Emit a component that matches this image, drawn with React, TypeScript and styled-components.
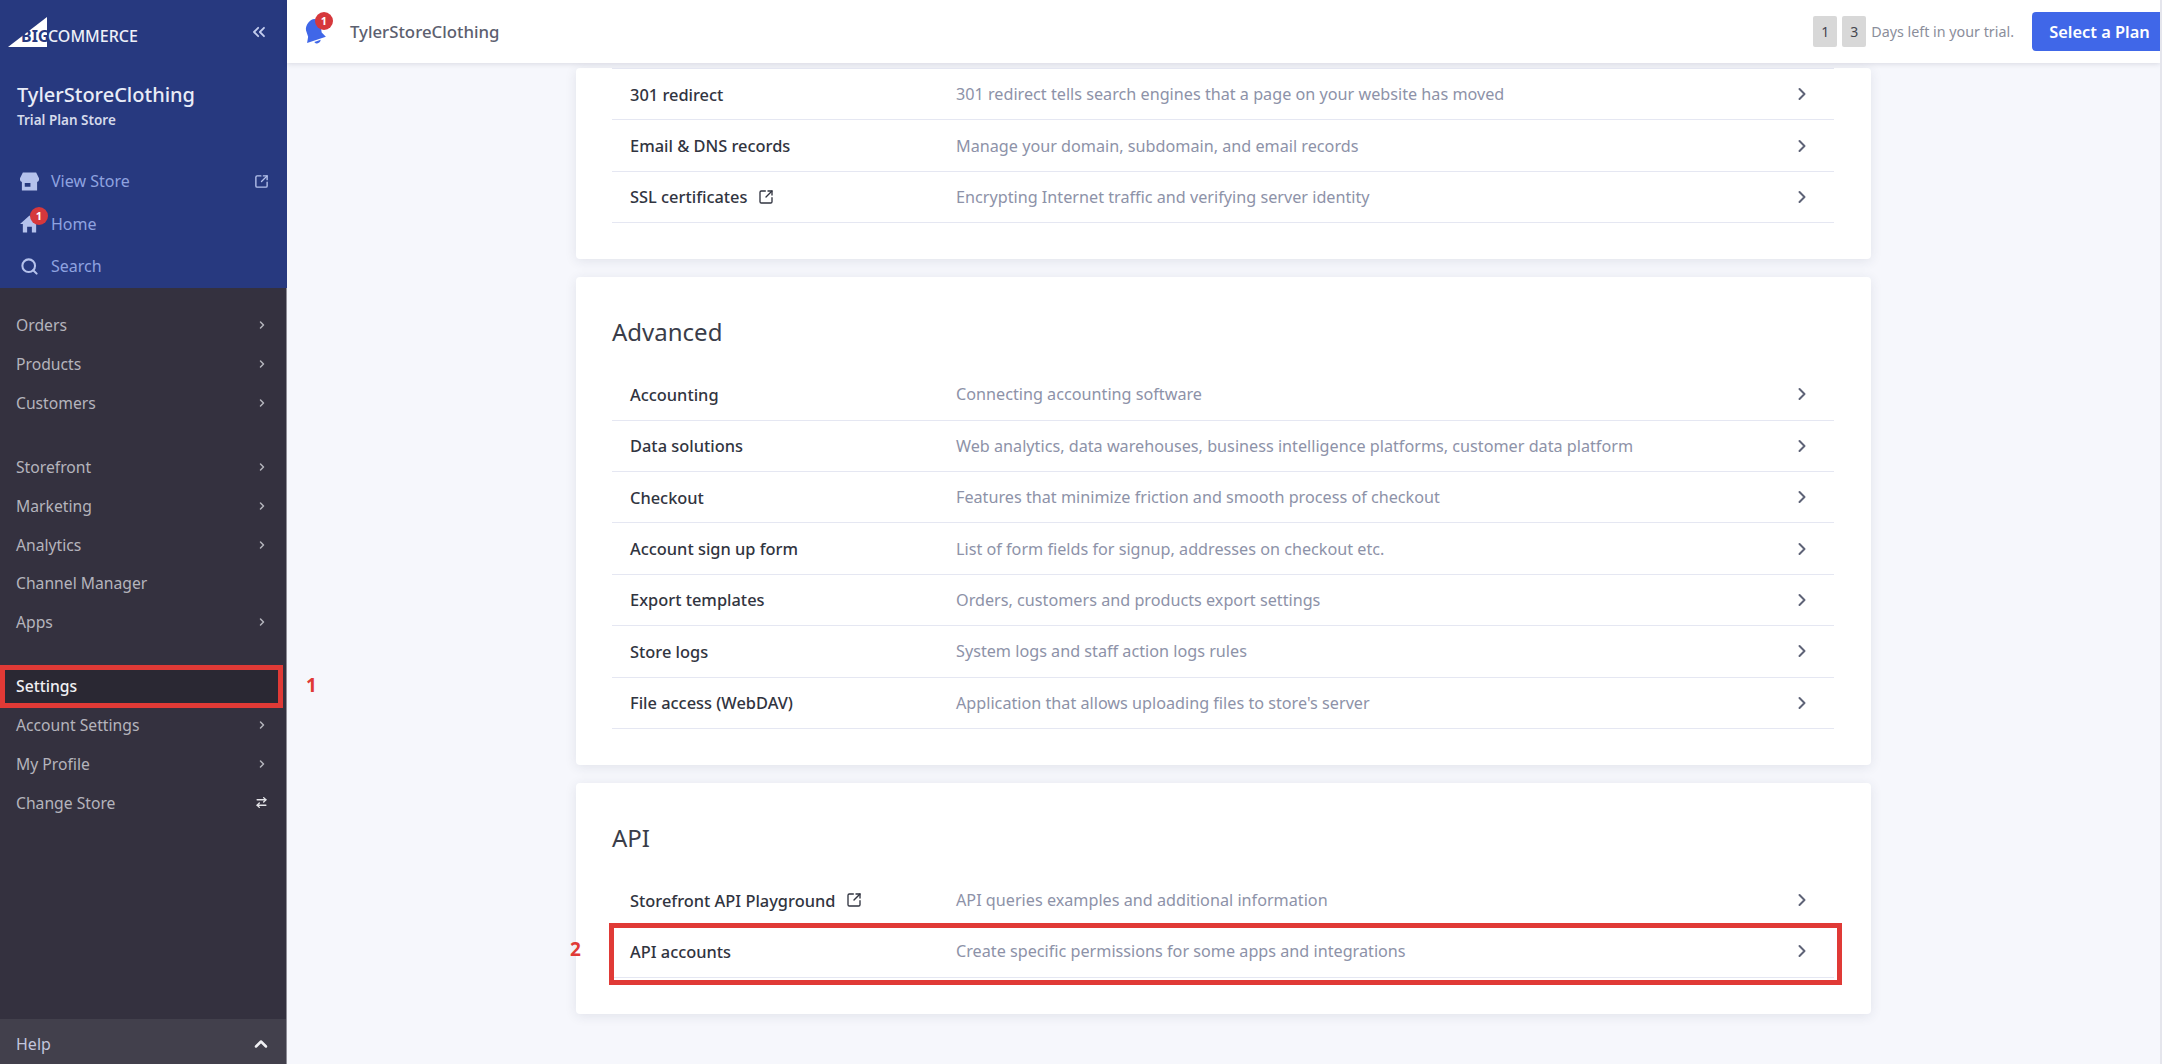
import React from "react";
import styled, { createGlobalStyle } from "styled-components";
import { ChevronRight, ChevronUp, ChevronsLeft, SquareArrowOutUpRight, Search, ArrowRightLeft } from "lucide-react";

const Global = createGlobalStyle`
  html, body {
    margin: 0;
    height: 100%;
    overflow: hidden;
    background: #f6f7fc;
    font-family: "Noto Sans", "Open Sans", sans-serif;
  }
  *, *::before, *::after { box-sizing: border-box; }
`;

const Page = styled.div`
  display: flex;
  width: 2162px;
  height: 1064px;
  overflow: hidden;
  border-right: 2px solid #e4e5ec;
`;

const Sidebar = styled.aside`
  width: 287px;
  flex: none;
  display: flex;
  flex-direction: column;
  background: #34313f;
  border-right: 1px solid #8e8d97;
`;

const BlueSection = styled.div`
  height: 288px;
  background: #27397f;
  padding: 17px 18px 0 8px;
  margin-right: -1px;
`;

const LogoRow = styled.div`
  height: 30px;
  display: flex;
  align-items: center;
  justify-content: space-between;
`;

const Logo = styled.div`
  position: relative;
  width: 132px;
  height: 30px;
`;

const LogoBig = styled.span`
  position: absolute;
  left: 13px;
  top: 9px;
  font-size: 16px;
  line-height: 20px;
  font-weight: 700;
  color: #27397f;
`;

const LogoCommerce = styled.span`
  position: absolute;
  left: 40px;
  top: 9px;
  font-size: 16px;
  line-height: 20px;
  font-weight: 500;
  color: #eef0f8;
`;

const StoreName = styled.div`
  margin: 34px 0 0 9px;
  font-size: 20px;
  line-height: 28px;
  font-weight: 500;
  color: #e9ecf7;
`;

const StorePlan = styled.div`
  margin: 1px 0 0 9px;
  font-size: 13.5px;
  line-height: 20px;
  font-weight: 600;
  color: #d5daeb;
`;

const BlueNav = styled.div`
  margin: 30px 0 0 12px;
  display: flex;
  flex-direction: column;
`;

const BlueItem = styled.div`
  position: relative;
  height: 42.5px;
  display: flex;
  align-items: center;
  gap: 12px;
  font-size: 16px;
  color: #8fa3e0;
`;

const BlueIcon = styled.span`
  position: relative;
  width: 19px;
  height: 20px;
  flex: none;
  display: flex;
  align-items: center;
  justify-content: center;
  color: #b5c2ec;
`;

const BlueLabel = styled.span`
  flex: 1;
`;

const Badge = styled.span`
  position: absolute;
  top: -7px;
  left: 10px;
  width: 18px;
  height: 18px;
  border-radius: 50%;
  background: #d6383c;
  color: #fff;
  font-size: 11px;
  font-weight: 700;
  line-height: 18px;
  text-align: center;
`;

const DarkNav = styled.nav`
  padding-top: 18px;
  flex: 1;
  display: flex;
  flex-direction: column;
`;

const NavGroup = styled.div`
  margin-bottom: 25.5px;
`;

const NavItem = styled.div<{ $active?: boolean }>`
  height: 38.75px;
  display: flex;
  align-items: center;
  justify-content: space-between;
  padding: 0 18px 0 16px;
  font-size: 15.7px;
  font-weight: ${(p) => (p.$active ? 500 : 400)};
  color: ${(p) => (p.$active ? "#f0f0f3" : "#b4b4bc")};
`;

const Highlight = styled.div`
  position: relative;
  background: #2a2833;
  width: 283px;
  &::after {
    content: "";
    position: absolute;
    left: 0;
    top: -2px;
    width: 283px;
    height: 43px;
    border: 5px solid #e03a36;
  }
`;

const Marker = styled.span`
  position: absolute;
  font-size: 19px;
  font-weight: 700;
  line-height: 24px;
  color: #e03a36;
`;

const SidebarMarker = styled(Marker)`
  left: 306px;
  top: 6px;
`;

const HelpBar = styled.div`
  height: 45px;
  display: flex;
  align-items: center;
  justify-content: space-between;
  padding: 4px 15px 0 16px;
  background: #42404c;
  font-size: 16px;
  color: #c2c6dc;
`;

const Main = styled.main`
  flex: 1;
  min-width: 0;
  display: flex;
  flex-direction: column;
`;

const Header = styled.header`
  position: relative;
  z-index: 2;
  height: 63px;
  flex: none;
  display: flex;
  align-items: center;
  background: #fff;
  box-shadow: 0 1px 5px rgba(40, 45, 70, 0.14);
  padding: 0 0 0 18px;
`;

const Bell = styled.span`
  position: relative;
  width: 24px;
  height: 30px;
  display: flex;
  align-items: center;
  justify-content: center;
`;

const BellBadge = styled(Badge)`
  top: -5px;
  left: 10px;
`;

const HeaderStore = styled.span`
  margin-left: 21px;
  font-size: 16.8px;
  font-weight: 500;
  color: #5c606f;
`;

const HeaderRight = styled.div`
  margin-left: auto;
  display: flex;
  align-items: center;
`;

const Digit = styled.span`
  width: 24px;
  height: 31px;
  margin-right: 5px;
  border-radius: 2px;
  background: #d8d8d8;
  display: flex;
  align-items: center;
  justify-content: center;
  font-size: 14px;
  color: #44464f;
`;

const TrialText = styled.span`
  font-size: 14.3px;
  color: #8b8e9b;
  margin-right: 18px;
`;

const PlanButton = styled.button`
  width: 128px;
  height: 39px;
  border: 0;
  border-radius: 4px 0 0 4px;
  background: #4067e8;
  color: #fff;
  font-family: inherit;
  font-size: 16.4px;
  font-weight: 600;
  padding: 0 0 0 7px;
`;

const Content = styled.div`
  flex: 1;
  min-height: 0;
  overflow: hidden;
  padding: 5px 289px 0 289px;
  display: flex;
  flex-direction: column;
  gap: 18px;
`;

const Card = styled.section`
  background: #fff;
  border-radius: 4px;
  box-shadow: 0 2px 12px rgba(40, 45, 80, 0.1);
  padding: 0 37px 36px 36px;
  flex: none;
`;

const CardTitle = styled.h2`
  height: 92px;
  margin: 0;
  padding-top: 38px;
  font-size: 24px;
  line-height: 34px;
  font-weight: 400;
  color: #3a3d49;
`;

const TopRule = styled.div`
  border-top: 1px solid #e5e7f2;
`;

const Row = styled.div`
  position: relative;
  height: 51.4px;
  display: grid;
  grid-template-columns: 326px 1fr 24px;
  align-items: center;
  padding: 0 18px 0 18px;
  border-bottom: 1px solid #e5e7f2;
`;

const RowTitle = styled.span`
  display: flex;
  align-items: center;
  gap: 11px;
  font-size: 16.4px;
  font-weight: 500;
  color: #313440;
`;

const RowDesc = styled.span`
  font-size: 16.2px;
  color: #8d92a8;
`;

const Chevron = styled(ChevronRight)`
  color: #5e6377;
`;

const RowOutline = styled.div`
  position: absolute;
  left: -3px;
  right: -8px;
  top: -3px;
  height: 62px;
  border: 5px solid #e03a36;
  pointer-events: none;
`;

const RowMarker = styled(Marker)`
  left: -42px;
  top: 11px;
`;

type Item = { title: string; desc: string; link?: boolean };

const firstRows: Item[] = [
  { title: "301 redirect", desc: "301 redirect tells search engines that a page on your website has moved" },
  { title: "Email & DNS records", desc: "Manage your domain, subdomain, and email records" },
  { title: "SSL certificates", desc: "Encrypting Internet traffic and verifying server identity", link: true },
];

const advancedRows: Item[] = [
  { title: "Accounting", desc: "Connecting accounting software" },
  { title: "Data solutions", desc: "Web analytics, data warehouses, business intelligence platforms, customer data platform" },
  { title: "Checkout", desc: "Features that minimize friction and smooth process of checkout" },
  { title: "Account sign up form", desc: "List of form fields for signup, addresses on checkout etc." },
  { title: "Export templates", desc: "Orders, customers and products export settings" },
  { title: "Store logs", desc: "System logs and staff action logs rules" },
  { title: "File access (WebDAV)", desc: "Application that allows uploading files to store's server" },
];

const SettingRow = ({ item, children }: { item: Item; children?: React.ReactNode }) => (
  <Row>
    <RowTitle>
      {item.title}
      {item.link && <SquareArrowOutUpRight size={16} strokeWidth={2} />}
    </RowTitle>
    <RowDesc>{item.desc}</RowDesc>
    <Chevron size={20} strokeWidth={2.4} />
    {children}
  </Row>
);

const App = () => (
  <Page>
    <Global />
    <Sidebar>
      <BlueSection>
        <LogoRow>
          <Logo>
            <svg width="40" height="30" viewBox="0 0 40 30">
              <path d="M39 0v30H0z" fill="#fff" />
            </svg>
            <LogoBig>BIG</LogoBig>
            <LogoCommerce>COMMERCE</LogoCommerce>
          </Logo>
          <ChevronsLeft size={20} color="#c3cdee" strokeWidth={2.2} />
        </LogoRow>
        <StoreName>TylerStoreClothing</StoreName>
        <StorePlan>Trial Plan Store</StorePlan>
        <BlueNav>
          <BlueItem>
            <BlueIcon>
              <svg width="20" height="19" viewBox="0 0 20 19" fill="currentColor">
                <path d="M3 0h14l3 6v2a2.5 2.5 0 0 1-2 2v9H2v-9a2.5 2.500 0 0 1-2-2V6zM5 11v4h6v-4z" fillRule="evenodd" />
              </svg>
            </BlueIcon>
            <BlueLabel>View Store</BlueLabel>
            <SquareArrowOutUpRight size={15} color="#b5c2ec" strokeWidth={2.2} />
          </BlueItem>
          <BlueItem>
            <BlueIcon>
              <svg width="20" height="18" viewBox="0 0 20 18" fill="currentColor">
                <path d="M10 0l10 9h-3v9h-4.500v-6h-5v6H3V9H0z" />
              </svg>
              <Badge>1</Badge>
            </BlueIcon>
            <BlueLabel>Home</BlueLabel>
          </BlueItem>
          <BlueItem>
            <BlueIcon>
              <Search size={21} strokeWidth={2.6} />
            </BlueIcon>
            <BlueLabel>Search</BlueLabel>
          </BlueItem>
        </BlueNav>
      </BlueSection>
      <DarkNav>
        <NavGroup>
          {["Orders", "Products", "Customers"].map((label) => (
            <NavItem key={label}>
              {label}
              <ChevronRight size={12} strokeWidth={3} />
            </NavItem>
          ))}
        </NavGroup>
        <NavGroup>
          {["Storefront", "Marketing", "Analytics"].map((label) => (
            <NavItem key={label}>
              {label}
              <ChevronRight size={12} strokeWidth={3} />
            </NavItem>
          ))}
          <NavItem>Channel Manager</NavItem>
          <NavItem>
            Apps
            <ChevronRight size={12} strokeWidth={3} />
          </NavItem>
        </NavGroup>
        <Highlight>
          <NavItem $active>Settings</NavItem>
          <SidebarMarker>1</SidebarMarker>
        </Highlight>
        <NavItem>
          Account Settings
          <ChevronRight size={12} strokeWidth={3} />
        </NavItem>
        <NavItem>
          My Profile
          <ChevronRight size={12} strokeWidth={3} />
        </NavItem>
        <NavItem>
          Change Store
          <ArrowRightLeft size={13} strokeWidth={2.6} color="#e4e4e8" />
        </NavItem>
      </DarkNav>
      <HelpBar>
        Help
        <ChevronUp size={20} strokeWidth={3} color="#f0f0f3" />
      </HelpBar>
    </Sidebar>
    <Main>
      <Header>
        <Bell>
          <svg width="24" height="29" viewBox="0 0 23 26" fill="#4067e8">
            <path d="M9 1c3 0 6 3 6 7l1 6 4 4-18 6 1-6-2-6c-1-5 4-11 8-11z" />
            <path d="M9 23l6-2c0 3-4 5-6 2z" />
          </svg>
          <BellBadge>1</BellBadge>
        </Bell>
        <HeaderStore>TylerStoreClothing</HeaderStore>
        <HeaderRight>
          <Digit>1</Digit>
          <Digit>3</Digit>
          <TrialText>Days left in your trial.</TrialText>
          <PlanButton>Select a Plan</PlanButton>
        </HeaderRight>
      </Header>
      <Content>
        <Card>
          <TopRule />
          {firstRows.map((item) => (
            <SettingRow key={item.title} item={item} />
          ))}
        </Card>
        <Card>
          <CardTitle>Advanced</CardTitle>
          {advancedRows.map((item) => (
            <SettingRow key={item.title} item={item} />
          ))}
        </Card>
        <Card>
          <CardTitle>API</CardTitle>
          <SettingRow item={{ title: "Storefront API Playground", desc: "API queries examples and additional information", link: true }} />
          <SettingRow item={{ title: "API accounts", desc: "Create specific permissions for some apps and integrations" }}>
            <RowOutline />
            <RowMarker>2</RowMarker>
          </SettingRow>
        </Card>
      </Content>
    </Main>
  </Page>
);

export default App;
